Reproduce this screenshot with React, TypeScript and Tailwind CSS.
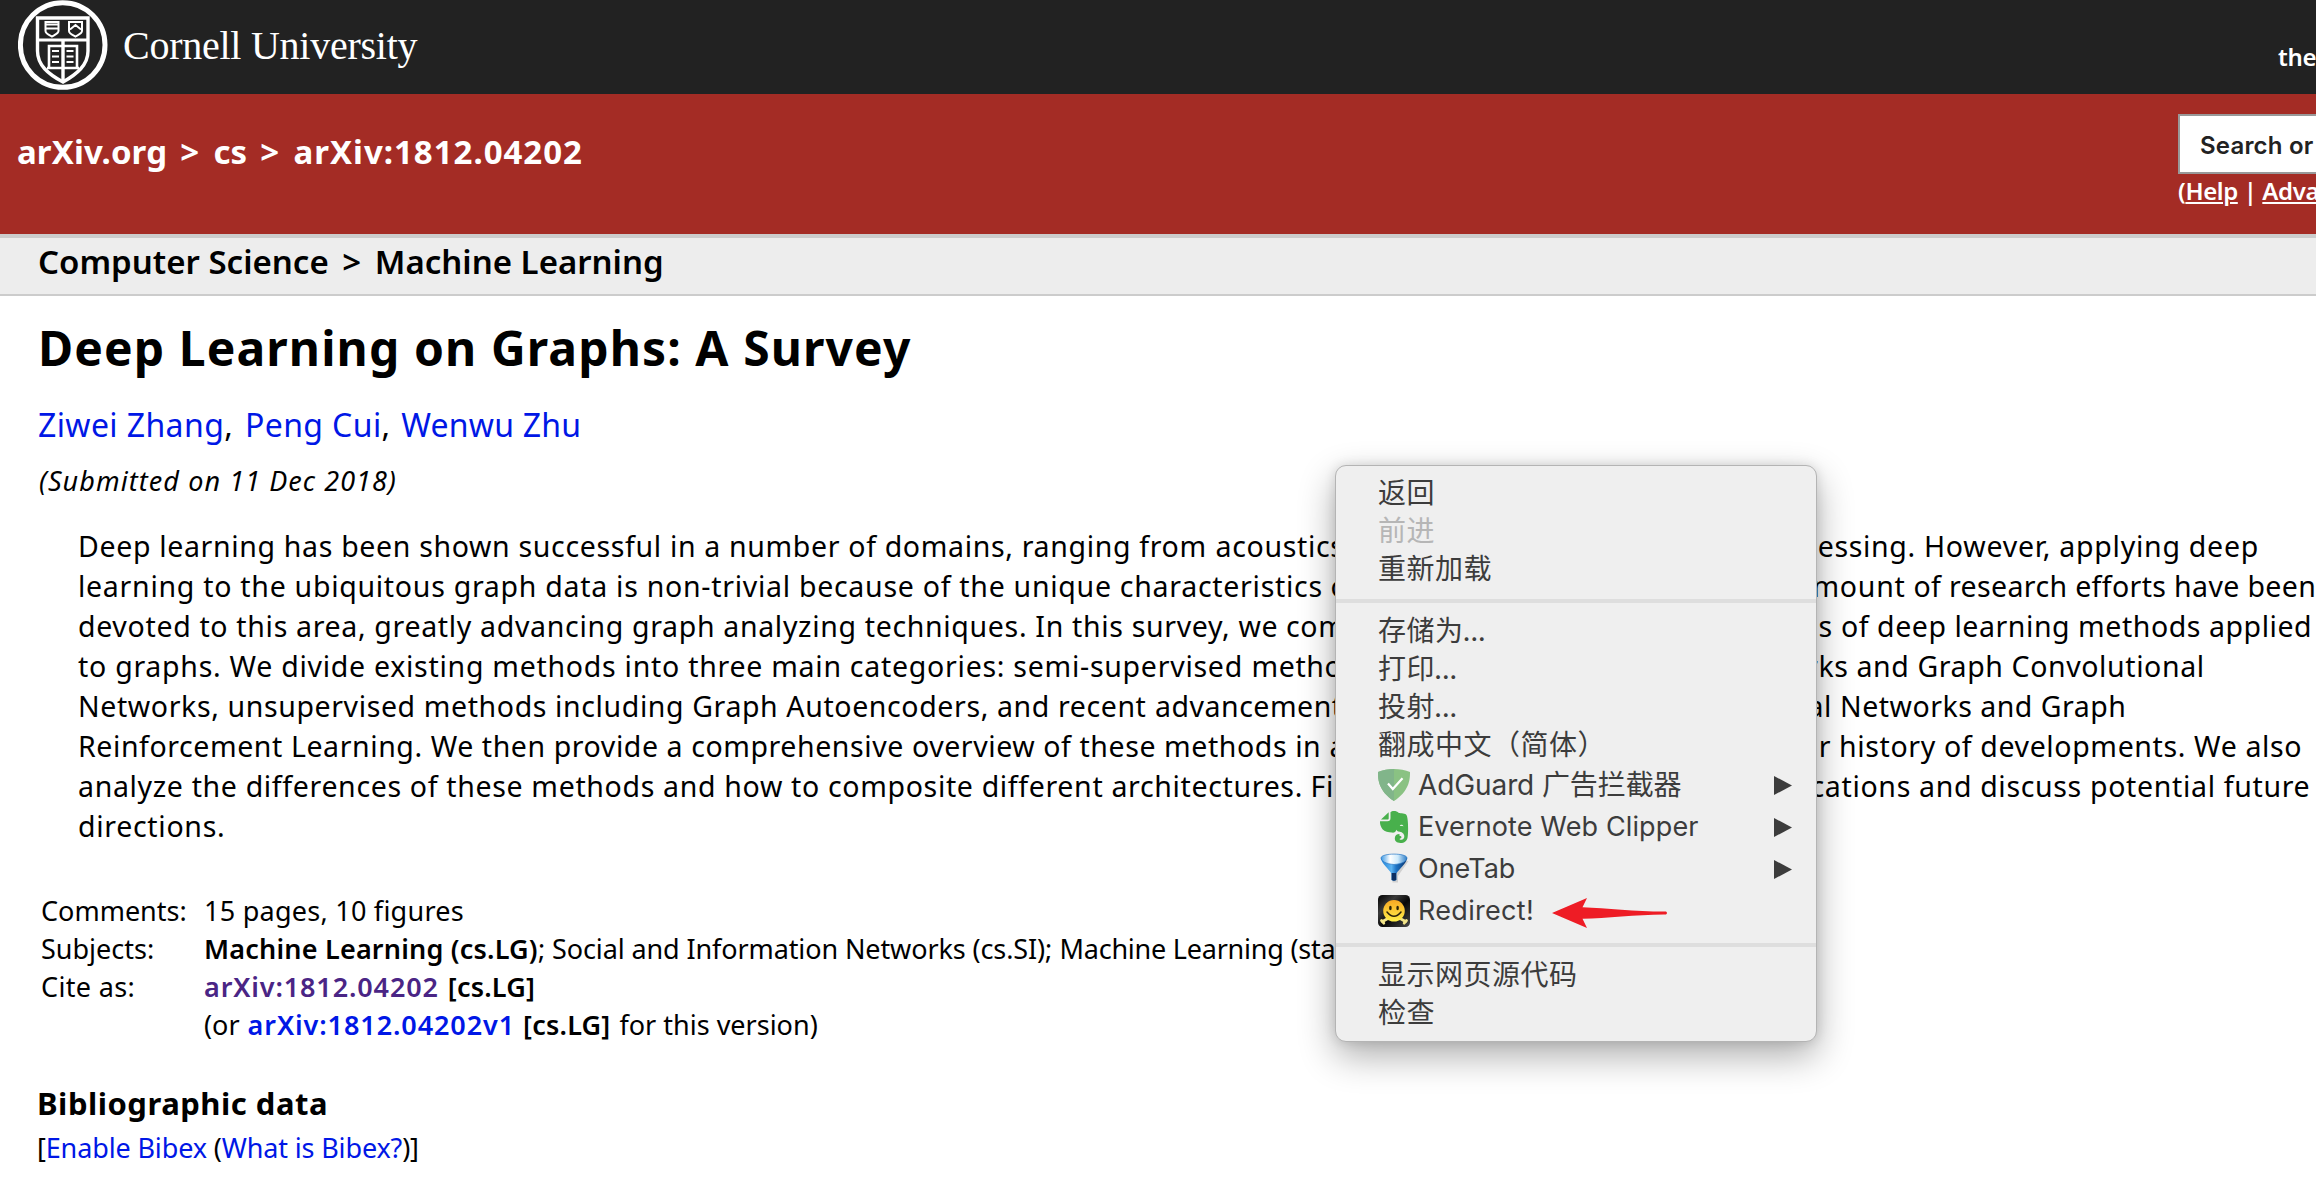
import React from 'react';
import clsx from 'clsx';

type Segment = { text: string; className: string };

const abstractLines: Segment[][] = [
  [
    { text: 'Deep learning has been shown successful in a number of domains, ranging from ', className: 'w-[1137.5px] tracking-[0.66px]' },
    { text: 'acoustics, images to natural language processing. ', className: 'w-[708.5px] tracking-[0.67px]' },
    { text: 'However, applying deep', className: 'tracking-[0.75px]' },
  ],
  [
    { text: 'learning to the ubiquitous graph data is non-trivial because of the unique characteristics ', className: 'w-[1252.5px] tracking-[0.72px]' },
    { text: 'of graphs. Recently, a significant amount ', className: 'w-[583px] tracking-[0.74px]' },
    { text: 'of research efforts have been', className: 'tracking-[0.36px]' },
  ],
  [
    { text: 'devoted to this area, greatly advancing graph analyzing techniques. In this survey, we ', className: 'w-[1208px] tracking-[0.67px]' },
    { text: 'comprehensively review different kinds ', className: 'w-[555px] tracking-[0.63px]' },
    { text: 'of deep learning methods applied', className: 'tracking-[0.55px]' },
  ],
  [
    { text: 'to graphs. We divide existing methods into three main categories: semi-supervised ', className: 'w-[1173.5px] tracking-[0.73px]' },
    { text: 'methods including Graph Neural Networks ', className: 'w-[605px] tracking-[0.6px]' },
    { text: 'and Graph Convolutional', className: 'tracking-[0.6px]' },
  ],
  [
    { text: 'Networks, unsupervised methods including Graph Autoencoders, and recent ', className: 'w-[1077px] tracking-[0.61px]' },
    { text: 'advancements including Graph Recurrent Neural ', className: 'w-[685px] tracking-[0.51px]' },
    { text: 'Networks and Graph', className: 'tracking-[0.5px]' },
  ],
  [
    { text: 'Reinforcement Learning. We then provide a comprehensive overview of these methods in ', className: 'w-[1251.5px] tracking-[0.58px]' },
    { text: 'a systematic manner following their ', className: 'w-[509.5px] tracking-[0.62px]' },
    { text: 'history of developments. We also', className: 'tracking-[0.63px]' },
  ],
  [
    { text: 'analyze the differences of these methods and how to composite different architectures. ', className: 'w-[1232.5px] tracking-[0.66px]' },
    { text: 'Finally, we briefly outline their applications ', className: 'w-[608.5px] tracking-[0.67px]' },
    { text: 'and discuss potential future', className: 'tracking-[0.66px]' },
  ],
  [{ text: 'directions.', className: 'tracking-[0.7px]' }],
];

function CornellSeal() {
  return (
    <svg className="h-[90px] w-[90px] shrink-0" viewBox="0 0 90 90" fill="none" stroke="#fff">
      <circle cx="44.7" cy="45" r="42.3" strokeWidth="5" />
      <path d="M19.5 18H70V51C70 65 59 74 45 82C30 74 19.5 65 19.5 51Z" strokeWidth="3.4" />
      <path d="M19.5 40H70" strokeWidth="3" />
      <path d="M27.5 22H40.5V31C40.5 33.5 36.5 35 34 36.5C31 35 27.5 33.5 27.5 31ZM51 22H64V31C64 33.5 60 35 57.5 36.5C54.5 35 51 33.5 51 31Z" strokeWidth="2" />
      <path d="M28 24.5H40M28 28.5H40M52 29.5L57.5 25L63 29.5" strokeWidth="1.8" />
      <path d="M31 46H59V68H31ZM29 68H61" strokeWidth="2.6" />
      <path d="M45 40V81" strokeWidth="3.4" />
      <path d="M34 51H41M34 56.5H41M34 62H41M48.5 51H55.5M48.5 56.5H55.5M48.5 62H55.5" strokeWidth="1.8" />
    </svg>
  );
}

function AdGuardIcon() {
  return (
    <svg className="h-8 w-8" viewBox="0 0 32 32">
      <path d="M16 0C10.500 0 4.500 1 0 3C0 8.500-.4 21.500 16 32C32.400 21.500 32 8.500 32 3C27.500 1 21.500 0 16 0Z" fill="#8ac283" />
      <path d="M16 0C10.500 0 4.500 1 0 3C0 8.500-.4 21.500 16 32Z" fill="#81b58a" />
      <path d="M10 14.500L14.800 20L24.500 9.200" fill="none" stroke="#fff" strokeWidth="2.200" />
    </svg>
  );
}

function EvernoteIcon() {
  return (
    <svg className="h-8 w-8" viewBox="0 0 32 32">
      <path
        d="M12.500 1.200C14-.5 19-.3 20.500 1.800C23 2.400 27.500 2.400 28.600 4.200C30.400 7.500 30.400 22 29.600 26.500C29 30 26.500 32 22.500 32C18.500 32 16.800 30 16.800 27.300C16.800 24.500 18.700 23 21.500 23V24.800C23.800 25 24 26.600 22.700 27.200C21.600 27.700 20.900 28.200 22.200 28.700C24.700 29.300 26.300 27.700 26.300 25.500C26.300 22.500 23.500 20.800 20.800 20.600C19.800 20.500 19 19.900 18.300 18.700C17.800 21 16.400 21.800 14 21.600C10.500 21.300 6.500 20.600 4.500 18.200C2.600 15.700 1.600 12.200 2.100 10.200H9.300C11.600 10.200 12.500 9.400 12.500 7Z"
        fill="#48b04c"
      />
      <path d="M3 8.400L10.700 1.200V7.200C10.700 8.100 10.300 8.400 9.500 8.400Z" fill="#48b04c" />
      <path d="M21.800 15C22.200 13.200 25.200 13.400 25.500 15.300C24.300 14.900 23 14.800 21.800 15Z" fill="#e8f4e8" />
    </svg>
  );
}

function OneTabIcon() {
  return (
    <svg className="h-8 w-8" viewBox="0 0 32 32">
      <defs>
        <linearGradient id="funnel" x1="0" x2="1">
          <stop offset="0" stopColor="#1f7fd6" />
          <stop offset=".4" stopColor="#5cb4f2" />
          <stop offset=".58" stopColor="#1d74c6" />
          <stop offset="1" stopColor="#0b3268" />
        </linearGradient>
        <linearGradient id="funnelTop" x1="0" x2="1">
          <stop offset="0" stopColor="#3a98e4" />
          <stop offset=".35" stopColor="#ffffff" />
          <stop offset=".65" stopColor="#cdeafc" />
          <stop offset="1" stopColor="#2d7cc6" />
        </linearGradient>
      </defs>
      <path d="M5 8L14.500 21.500V29.500H20V23L30.500 8Z" fill="#999" opacity=".35" />
      <path d="M3 5C3 10 11 16 13.400 20.500V27Q16 28.600 18.400 27V20.500C21 16 29 10 29 5Z" fill="url(#funnel)" />
      <path d="M3 5C3 -.2 29 -.2 29 5C29 8 24 11 16 11.500C8 11 3 8 3 5Z" fill="url(#funnelTop)" stroke="#2b78c4" strokeWidth=".7" />
      <path d="M13.600 20V27Q16 28.600 18.200 27V20Z" fill="#0c2f63" />
    </svg>
  );
}

function RedirectIcon() {
  return (
    <svg className="h-8 w-8" viewBox="0 0 32 32">
      <defs>
        <linearGradient id="tile" x1="0" y1="0" x2="1" y2="1">
          <stop offset="0" stopColor="#000" />
          <stop offset=".3" stopColor="#3a3a3a" />
          <stop offset=".55" stopColor="#080808" />
          <stop offset="1" stopColor="#4a4a4a" />
        </linearGradient>
        <linearGradient id="face" x1="0" y1="0" x2="0" y2="1">
          <stop offset="0" stopColor="#f7a823" />
          <stop offset="1" stopColor="#fff04a" />
        </linearGradient>
      </defs>
      <rect width="32" height="32" rx="4.500" fill="url(#tile)" />
      <g stroke="#f3e58a" strokeWidth="2.800" strokeLinecap="round">
        <path d="M4.500 26.500L9 24M27.500 26.500L23 24" />
        <path d="M3.500 25.500L5.800 28.200M28.500 25.500L26.200 28.200" />
      </g>
      <circle cx="16" cy="15.800" r="10.800" fill="url(#face)" />
      <ellipse cx="12.400" cy="13" rx="1.300" ry="2.300" fill="#2a2208" />
      <ellipse cx="19.600" cy="13" rx="1.300" ry="2.300" fill="#2a2208" />
      <path d="M9 17Q16 25.500 23 17" fill="none" stroke="#2a2208" strokeWidth="1.500" strokeLinecap="round" />
    </svg>
  );
}

function MenuItem({ label, disabled = false }: { label: string; disabled?: boolean }) {
  return (
    <li className={clsx('flex h-[38px] items-center pl-[42px] tracking-[0.5px]', disabled ? 'text-[#b6b6b6]' : 'text-[#3c3c3c]')}>
      {label.replace('...', '')}
      {label.endsWith('...') && <span className="-ml-px tracking-[-0.4px]">...</span>}
    </li>
  );
}

function ExtensionItem({ icon, label, className, submenu = true, children }: { icon: React.ReactNode; label: string; className?: string; submenu?: boolean; children?: React.ReactNode }) {
  return (
    <li className="flex h-[42px] items-center pr-6 pl-[42px] text-[#3c3c3c]">
      {icon}
      <span className={clsx('ml-2', className)}>{label}</span>
      {children}
      {submenu && (
        <svg className="ml-auto h-[19px] w-[18px]" viewBox="0 0 18 19">
          <path d="M0 0L18 9.500L0 19Z" fill="#3c3c3c" />
        </svg>
      )}
    </li>
  );
}

function Separator() {
  return <li className="mt-[11px] mb-[9px] h-1 bg-[#dedede]" />;
}

function ContextMenu() {
  return (
    <ul className='absolute top-[465px] left-[1335px] w-[482px] rounded-[11px] border border-[#b4b4b4] bg-[#efefef] pt-2 pb-[9px] font-["Inter","Noto_Sans_CJK_SC",sans-serif] text-[28px] leading-[38px] whitespace-nowrap shadow-[0_14px_36px_rgba(0,0,0,0.32),0_0_12px_rgba(0,0,0,0.12)]'>
      <MenuItem label="返回" />
      <MenuItem label="前进" disabled />
      <MenuItem label="重新加载" />
      <Separator />
      <MenuItem label="存储为..." />
      <MenuItem label="打印..." />
      <MenuItem label="投射..." />
      <MenuItem label="翻成中文（简体）" />
      <ExtensionItem icon={<AdGuardIcon />} label="AdGuard 广告拦截器" className="tracking-[-0.1px]" />
      <ExtensionItem icon={<EvernoteIcon />} label="Evernote Web Clipper" className="text-[27px] tracking-[0.12px]" />
      <ExtensionItem icon={<OneTabIcon />} label="OneTab" className="text-[27px]" />
      <ExtensionItem icon={<RedirectIcon />} label="Redirect!" className="text-[27px] tracking-[0.3px]" submenu={false}>
        <svg className="mt-1 ml-[18px] h-[30px] w-[116px]" viewBox="0 0 116 30">
          <path d="M0 15L35 0L30.500 9.200C55 10 85 13.700 114 13.500Q116 15 114 16.500C85 16.300 55 20.500 30.500 20.800L35 30Z" fill="#ee1c25" />
        </svg>
      </ExtensionItem>
      <Separator />
      <MenuItem label="显示网页源代码" />
      <MenuItem label="检查" />
    </ul>
  );
}

export default function App() {
  return (
    <div className='relative h-[1196px] w-[2316px] overflow-hidden bg-white font-["Noto_Sans",sans-serif] whitespace-pre text-black'>
      <header className="flex h-[94px] justify-between bg-[#222222] text-white">
        <div className="flex pl-[18px]">
          <CornellSeal />
          <span className='mt-[23px] ml-[15px] font-["Liberation_Serif",serif] text-[40px] leading-[46px] tracking-[-0.25px]'>Cornell University</span>
        </div>
        <span className="mt-[37px] w-[38px] text-2xl leading-10 font-semibold tracking-[-0.3px]">the</span>
      </header>

      <div className="flex h-[144px] justify-between border-b-4 border-[#cccccc] bg-[#a42c25] text-white">
        <div className="mt-[38px] ml-[17px] text-[33px] leading-10 font-bold tracking-[0.98px] [word-spacing:3.7px]">
          <a className="tracking-[0.1px]">arXiv.org</a> &gt; <a className="tracking-normal">cs</a> &gt; <a>arXiv:1812.04202</a>
        </div>
        <div className="w-[138px]">
          <div className='mt-5 flex h-[60px] items-center border-2 border-r-0 border-[#999999] bg-white pt-1 pl-[20px] font-["Inter",sans-serif] text-2xl font-semibold tracking-[0.2px] text-[#222222]'>
            Search or
          </div>
          <div className="text-2xl leading-[34px] font-semibold tracking-[-0.4px]">
            (<a className="underline decoration-2 underline-offset-2">Help</a> | <a className="underline decoration-2 underline-offset-2">Adva</a>
          </div>
        </div>
      </div>

      <div className="flex h-[58px] border-b-2 border-[#cccccc] bg-[#ededed] pt-1 pl-[38px] text-[33px] leading-10 font-semibold">
        Computer Science <span className="mx-[5px]">&gt;</span> Machine Learning
      </div>

      <main className="flex flex-col">
        <h1 className="mt-[22px] pl-[38px] text-5xl leading-[60px] font-bold tracking-[1.1px]">Deep Learning on Graphs: A Survey</h1>
        <div className="mt-[27px] pl-[38px] text-[32px] leading-10 tracking-[0.4px]">
          <a className="text-[#0017e6]">Ziwei Zhang</a>, <a className="ml-[3px] text-[#0017e6]">Peng Cui</a>, <a className="ml-[2px] text-[#0017e6] tracking-[0.2px]">Wenwu Zhu</a>
        </div>
        <div className="mt-4 pl-[39px] text-[27px] leading-10 tracking-[1.07px] italic">(Submitted on 11 Dec 2018)</div>

        <div className="mt-[25px] pl-[78px] text-[28.5px] leading-10">
          {abstractLines.map((line) => (
            <div key={line[0].text} className="flex">
              {line.map((segment) => (
                <span key={segment.text} className={clsx('shrink-0', segment.className)}>
                  {segment.text}
                </span>
              ))}
            </div>
          ))}
        </div>

        <dl className="mt-[46px] grid grid-cols-[163px_auto] pl-[41px] text-[27px] leading-[38px]">
          <dt>Comments:</dt>
          <dd className="tracking-[0.25px]">15 pages, 10 figures</dd>
          <dt>Subjects:</dt>
          <dd className="flex">
            <span className="w-[334px] font-semibold tracking-[0.2px]">Machine Learning (cs.LG)</span>
            <span className="w-[521.5px] tracking-[-0.11px]">; Social and Information Networks (cs.SI); </span>
            <span className="tracking-[-0.23px]">Machine Learning (sta</span>
          </dd>
          <dt className="tracking-[0.33px]">Cite as:</dt>
          <dd className="font-semibold">
            <a className="tracking-[0.86px] text-[#4a2585]">arXiv:1812.04202</a> <span className="ml-[2px] tracking-[0.2px]">[cs.LG]</span>
          </dd>
          <dt />
          <dd>
            (or <a className="ml-px font-semibold tracking-[0.9px] text-[#0017e6]">arXiv:1812.04202v1</a> <b className="ml-px font-semibold tracking-[0.2px]">[cs.LG]</b> <span className="ml-0.5">for this version)</span>
          </dd>
        </dl>

        <h2 className="mt-[39px] pl-[37px] text-[31px] leading-10 font-bold tracking-[0.5px]">Bibliographic data</h2>
        <div className="mt-[6px] pl-[37px] text-[27px] leading-[38px] tracking-[-0.14px]">
          [<a className="text-[#0017e6]">Enable Bibex</a> (<a className="text-[#0017e6]">What is Bibex?</a>)]
        </div>
      </main>

      <ContextMenu />
    </div>
  );
}
